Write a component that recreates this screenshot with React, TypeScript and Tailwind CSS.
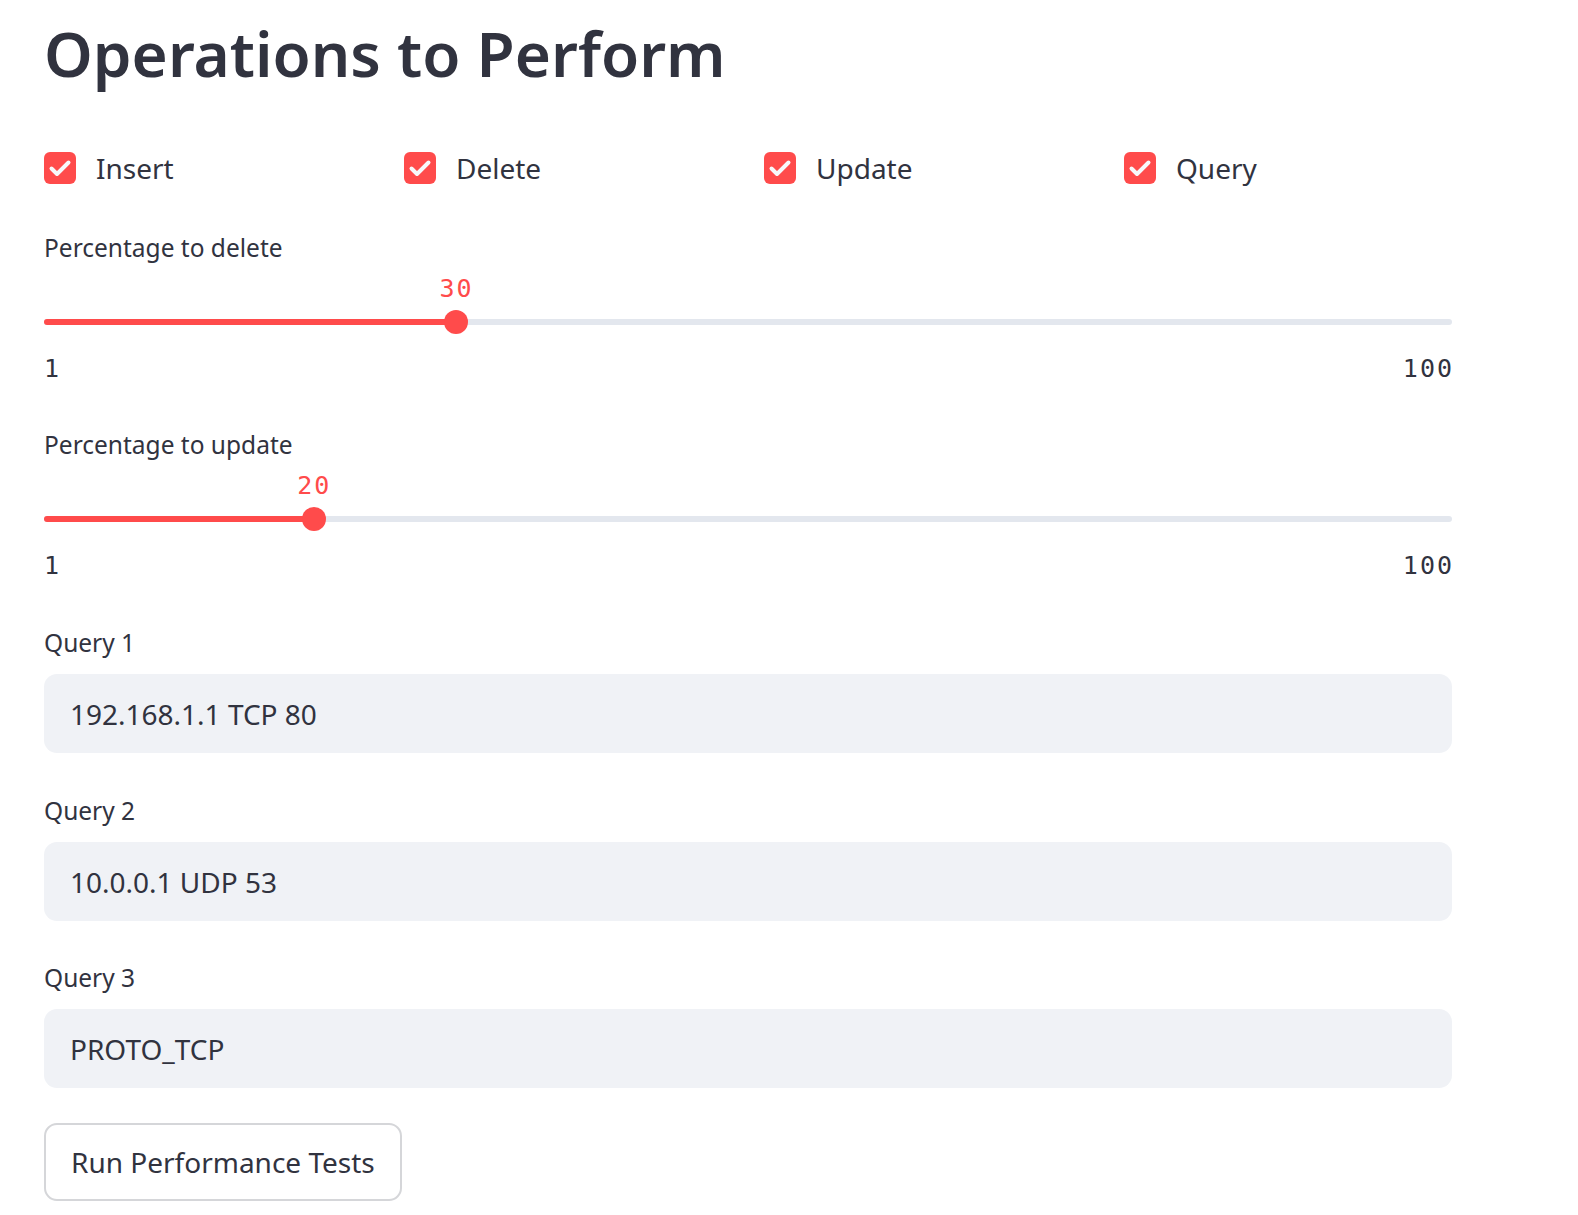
import React from "react";

function CheckItem({ label }: { label: string }) {
  return (
    <div className="flex h-[40px] items-center gap-[20px]">
      <div className="flex h-[32px] w-[32px] items-center justify-center rounded-[6px] bg-[#FF4B4B]">
        <svg width="32" height="32" viewBox="0 0 32 32" fill="none">
          <path
            d="M7.5 16.5 L13 22 L24.5 10.5"
            stroke="#F7F8FA"
            strokeWidth="4"
            strokeLinecap="round"
            strokeLinejoin="round"
          />
        </svg>
      </div>
      <span className="text-[28px] leading-[40px]">{label}</span>
    </div>
  );
}

function Slider({ label, value, min = 1, max = 100 }: { label: string; value: number; min?: number; max?: number }) {
  const pct = ((value - min) / (max - min)) * 100;
  return (
    <div>
      <div className="h-[32px] text-[24.5px] leading-[32px]">{label}</div>
      <div className="relative mt-[11px] h-[28px]">
        <span
          className="absolute top-0 -translate-x-1/2 font-['DejaVu_Sans_Mono',monospace] text-[25px] leading-[28px] tracking-[2px] text-[#FF4B4B]"
          style={{ left: `${pct}%` }}
        >
          {value}
        </span>
      </div>
      <div className="relative mt-[3px] flex h-[32px] items-center">
        <div className="h-[6.4px] w-full rounded-full bg-[#E3E7EE]">
          <div className="h-full rounded-full bg-[#FF4B4B]" style={{ width: `${pct}%` }} />
        </div>
        <div
          className="absolute top-1/2 h-[24px] w-[24px] -translate-x-1/2 -translate-y-1/2 rounded-full bg-[#FF4B4B]"
          style={{ left: `${pct}%` }}
        />
      </div>
      <div className="mt-[16px] flex h-[30px] justify-between font-['DejaVu_Sans_Mono',monospace] text-[25px] leading-[30px]">
        <span>{min}</span>
        <span className="tracking-[2px] -mr-[2px]">{max}</span>
      </div>
    </div>
  );
}

function QueryInput({ label, value }: { label: string; value: string }) {
  return (
    <div>
      <div className="h-[32px] text-[24.5px] leading-[32px]">{label}</div>
      <div className="mt-[15px] flex h-[79px] items-center rounded-[13px] bg-[#F0F2F6] pl-[26px] text-[28px]">
        {value}
      </div>
    </div>
  );
}

export default function App() {
  return (
    <div className="min-h-screen bg-white font-['Noto_Sans','Open_Sans',sans-serif] text-[#31333F]">
      <div className="ml-[44px] w-[1408px] pt-[18px]">
        <h1 className="h-[70px] text-[62px] font-semibold leading-[70px]">Operations to Perform</h1>
        <div className="mt-[60px] grid grid-cols-4 gap-x-[32px]">
          <CheckItem label="Insert" />
          <CheckItem label="Delete" />
          <CheckItem label="Update" />
          <CheckItem label="Query" />
        </div>
        <div className="mt-[44px]">
          <Slider label="Percentage to delete" value={30} />
        </div>
        <div className="mt-[45px]">
          <Slider label="Percentage to update" value={20} />
        </div>
        <div className="mt-[46px]">
          <QueryInput label="Query 1" value="192.168.1.1 TCP 80" />
        </div>
        <div className="mt-[42px]">
          <QueryInput label="Query 2" value="10.0.0.1 UDP 53" />
        </div>
        <div className="mt-[41px]">
          <QueryInput label="Query 3" value="PROTO_TCP" />
        </div>
        <button className="mt-[35px] flex h-[78px] items-center rounded-[13px] border-[2px] border-[#D5D6D9] bg-white px-[25px] text-[28px]">
          Run Performance Tests
        </button>
      </div>
    </div>
  );
}
